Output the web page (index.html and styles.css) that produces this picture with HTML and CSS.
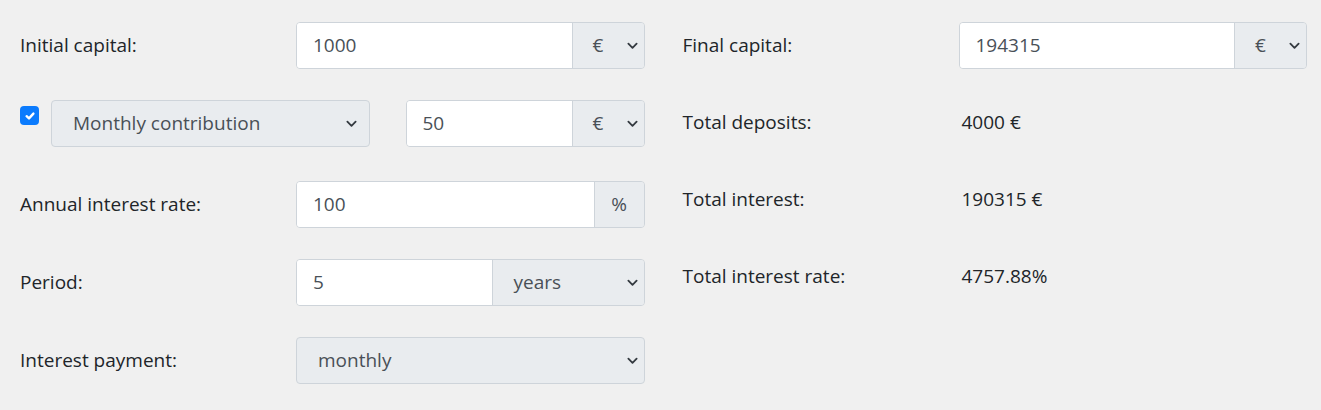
FILE: index.html
```
<!DOCTYPE html>
<html>
<head>
<meta charset="utf-8">
<title>Compound interest</title>
<link rel="stylesheet" href="styles.css">
</head>
<body>

<div class="calc">

   <div class="col">

      <div class="row">
         <div class="label">Initial capital:</div>
         <div class="group">
            <div class="field">1000</div>
            <div class="addon pick cur">€<svg class="chev" viewBox="0 0 12 8"><path d="M1.5 1.5 L6 6 L10.5 1.5"/></svg></div>
         </div>
      </div>

      <div class="row row-contrib">
         <div class="check"><svg viewBox="0 0 12 12"><path d="M2.6 6.2 L5 8.4 L9.4 3.6"/></svg></div>
         <div class="pick wide">Monthly contribution<svg class="chev" viewBox="0 0 12 8"><path d="M1.5 1.5 L6 6 L10.5 1.5"/></svg></div>
         <div class="group small">
            <div class="field">50</div>
            <div class="addon pick cur">€<svg class="chev" viewBox="0 0 12 8"><path d="M1.5 1.5 L6 6 L10.5 1.5"/></svg></div>
         </div>
      </div>

      <div class="row">
         <div class="label">Annual interest rate:</div>
         <div class="group">
            <div class="field">100</div>
            <div class="addon pct">%</div>
         </div>
      </div>

      <div class="row">
         <div class="label">Period:</div>
         <div class="group">
            <div class="field">5</div>
            <div class="addon pick years">years<svg class="chev" viewBox="0 0 12 8"><path d="M1.5 1.5 L6 6 L10.5 1.5"/></svg></div>
         </div>
      </div>

      <div class="row">
         <div class="label">Interest payment:</div>
         <div class="pick full">monthly<svg class="chev" viewBox="0 0 12 8"><path d="M1.5 1.5 L6 6 L10.5 1.5"/></svg></div>
      </div>

   </div>

   <div class="col">

      <div class="row">
         <div class="label">Final capital:</div>
         <div class="group">
            <div class="field">194315</div>
            <div class="addon pick cur">€<svg class="chev" viewBox="0 0 12 8"><path d="M1.5 1.5 L6 6 L10.5 1.5"/></svg></div>
         </div>
      </div>

      <div class="row result">
         <div class="label">Total deposits:</div>
         <div class="value">4000 €</div>
      </div>

      <div class="row result">
         <div class="label">Total interest:</div>
         <div class="value">190315 €</div>
      </div>

      <div class="row result">
         <div class="label">Total interest rate:</div>
         <div class="value">4757.88%</div>
      </div>

   </div>

</div>

</body>
</html>
```

FILE: styles.css
```
html , body {
   margin:0px;
   padding:0px;
}

body {
   background:#f0f0f0;
   font-family:"Open Sans", "Noto Sans", sans-serif;
   font-size:19px;
   color:#212529;
}

.calc {
   display:grid;
   grid-template-columns:1fr 1fr;
   column-gap:38px;
   padding:22px 14px 0px 20px;
}

.col {
   display:flex;
   flex-direction:column;
}

.row {
   display:flex;
   align-items:center;
   height:47px;
   margin-bottom:31px;
}

.row-contrib {
   margin-bottom:34px;
   align-items:flex-start;
}

.result {
   height:46px;
   margin-bottom:31px;
}

.label {
   width:276px;
   flex:none;
   padding-bottom:2px;
}

.result .label {
   width:279px;
}

.group {
   flex:1;
   display:flex;
   height:100%;
   border:1px solid #ced4da;
   border-radius:4px;
   overflow:hidden;
   box-sizing:border-box;
}

.group.small {
   flex:none;
   width:239px;
   margin-left:auto;
}

.field {
   flex:1;
   background:#fff;
   color:#495057;
   padding-left:16px;
   padding-bottom:2px;
   display:flex;
   align-items:center;
}

.addon {
   flex:none;
   background:#e9ecef;
   border-left:1px solid #ced4da;
   color:#495057;
   display:flex;
   align-items:center;
   box-sizing:border-box;
}

.pick {
   display:flex;
   align-items:center;
   background:#e9ecef;
   color:#495057;
   padding-left:21px;
   padding-right:12px;
   padding-bottom:2px;
   box-sizing:border-box;
}

.pick .chev {
   width:11px;
   height:8px;
   margin-left:auto;
   margin-top:2px;
   fill:none;
   stroke:#343a40;
   stroke-width:2;
   stroke-linecap:round;
   stroke-linejoin:round;
}

.cur {
   width:72px;
   padding-left:20px;
   padding-right:6px;
}

.pct {
   width:50px;
   justify-content:center;
   padding-bottom:2px;
}

.years {
   width:152px;
   padding-left:21px;
   padding-right:6px;
}

.wide {
   width:319px;
   height:47px;
   margin-left:12px;
   border:1px solid #ced4da;
   border-radius:4px;
}

.full {
   flex:1;
   height:100%;
   border:1px solid #ced4da;
   border-radius:4px;
   padding-right:6px;
}

.check {
   width:19px;
   height:19px;
   margin-top:6px;
   background:#0b7bfd;
   border-radius:4px;
   flex:none;
   display:flex;
   align-items:center;
   justify-content:center;
}

.check svg {
   width:12px;
   height:12px;
   fill:none;
   stroke:#fff;
   stroke-width:2.4;
   stroke-linecap:round;
   stroke-linejoin:round;
}

.value {
   color:#212529;
   padding-bottom:2px;
}
```
